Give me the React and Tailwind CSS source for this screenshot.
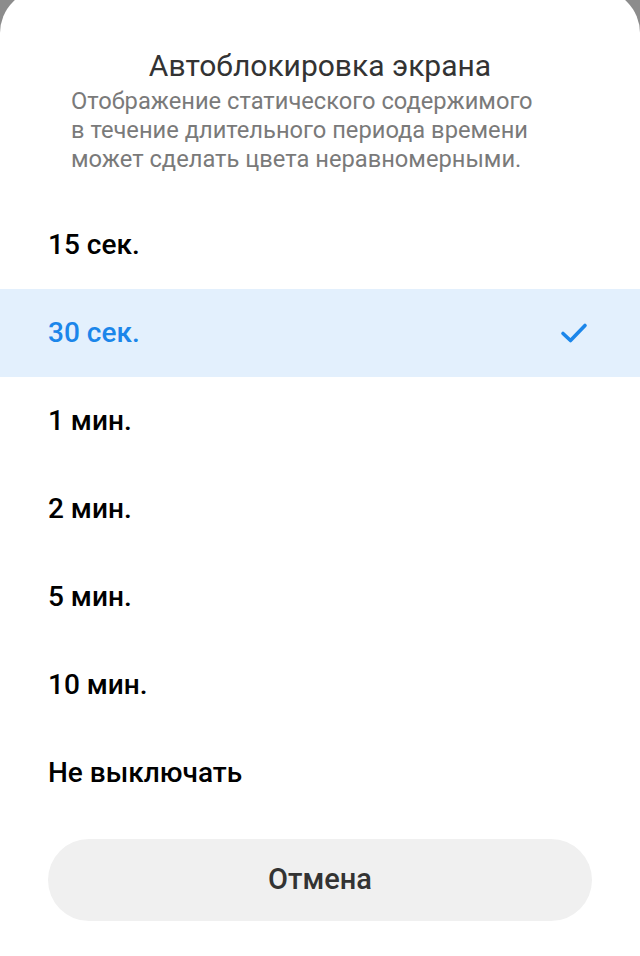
import React from "react";

const options = ["15 сек.", "30 сек.", "1 мин.", "2 мин.", "5 мин.", "10 мин.", "Не выключать"];
const selected = "30 сек.";

function Check() {
  return (
    <svg width="28" height="22" viewBox="0 0 28 22" fill="none">
      <path d="M3 11.5 L10.5 18.5 L25 3.5" stroke="#1b86ea" strokeWidth="3.6" strokeLinecap="round" strokeLinejoin="round" />
    </svg>
  );
}

export default function App() {
  return (
    <div className="w-[640px] h-[956px] bg-[#8c8c8c] overflow-hidden" style={{ fontFamily: "Roboto, 'Noto Sans', sans-serif" }}>
      <div className="mt-[-11px] h-[967px] bg-white rounded-t-[44px] pt-[59px] flex flex-col">
        <h1 className="text-center text-[30px] leading-[36px] text-[#333333] font-normal">Автоблокировка экрана</h1>
        <p className="pl-[71px] mt-[3px] text-[23.7px] leading-[29px] text-[#7a7a7a]">
          Отображение статического содержимого
          <br />в течение длительного периода времени
          <br />может сделать цвета неравномерными.
        </p>
        <ul className="mt-[27px]">
          {options.map((o) => {
            const active = o === selected;
            return (
              <li
                key={o}
                className={
                  active
                    ? "h-[88px] flex items-center justify-between pl-[48px] pr-[52px] bg-[#e3f0fd]"
                    : "h-[88px] flex items-center justify-between pl-[48px] pr-[52px]"
                }
              >
                <span className={active ? "text-[28px] font-medium text-[#1b86ea]" : "text-[28px] font-medium text-black"}>{o}</span>
                {active && <Check />}
              </li>
            );
          })}
        </ul>
        <div className="px-[48px] mt-[22px]">
          <button className="w-full h-[82px] rounded-full bg-[#f0f0f0] text-[29px] font-medium text-[#333333]">Отмена</button>
        </div>
      </div>
    </div>
  );
}
